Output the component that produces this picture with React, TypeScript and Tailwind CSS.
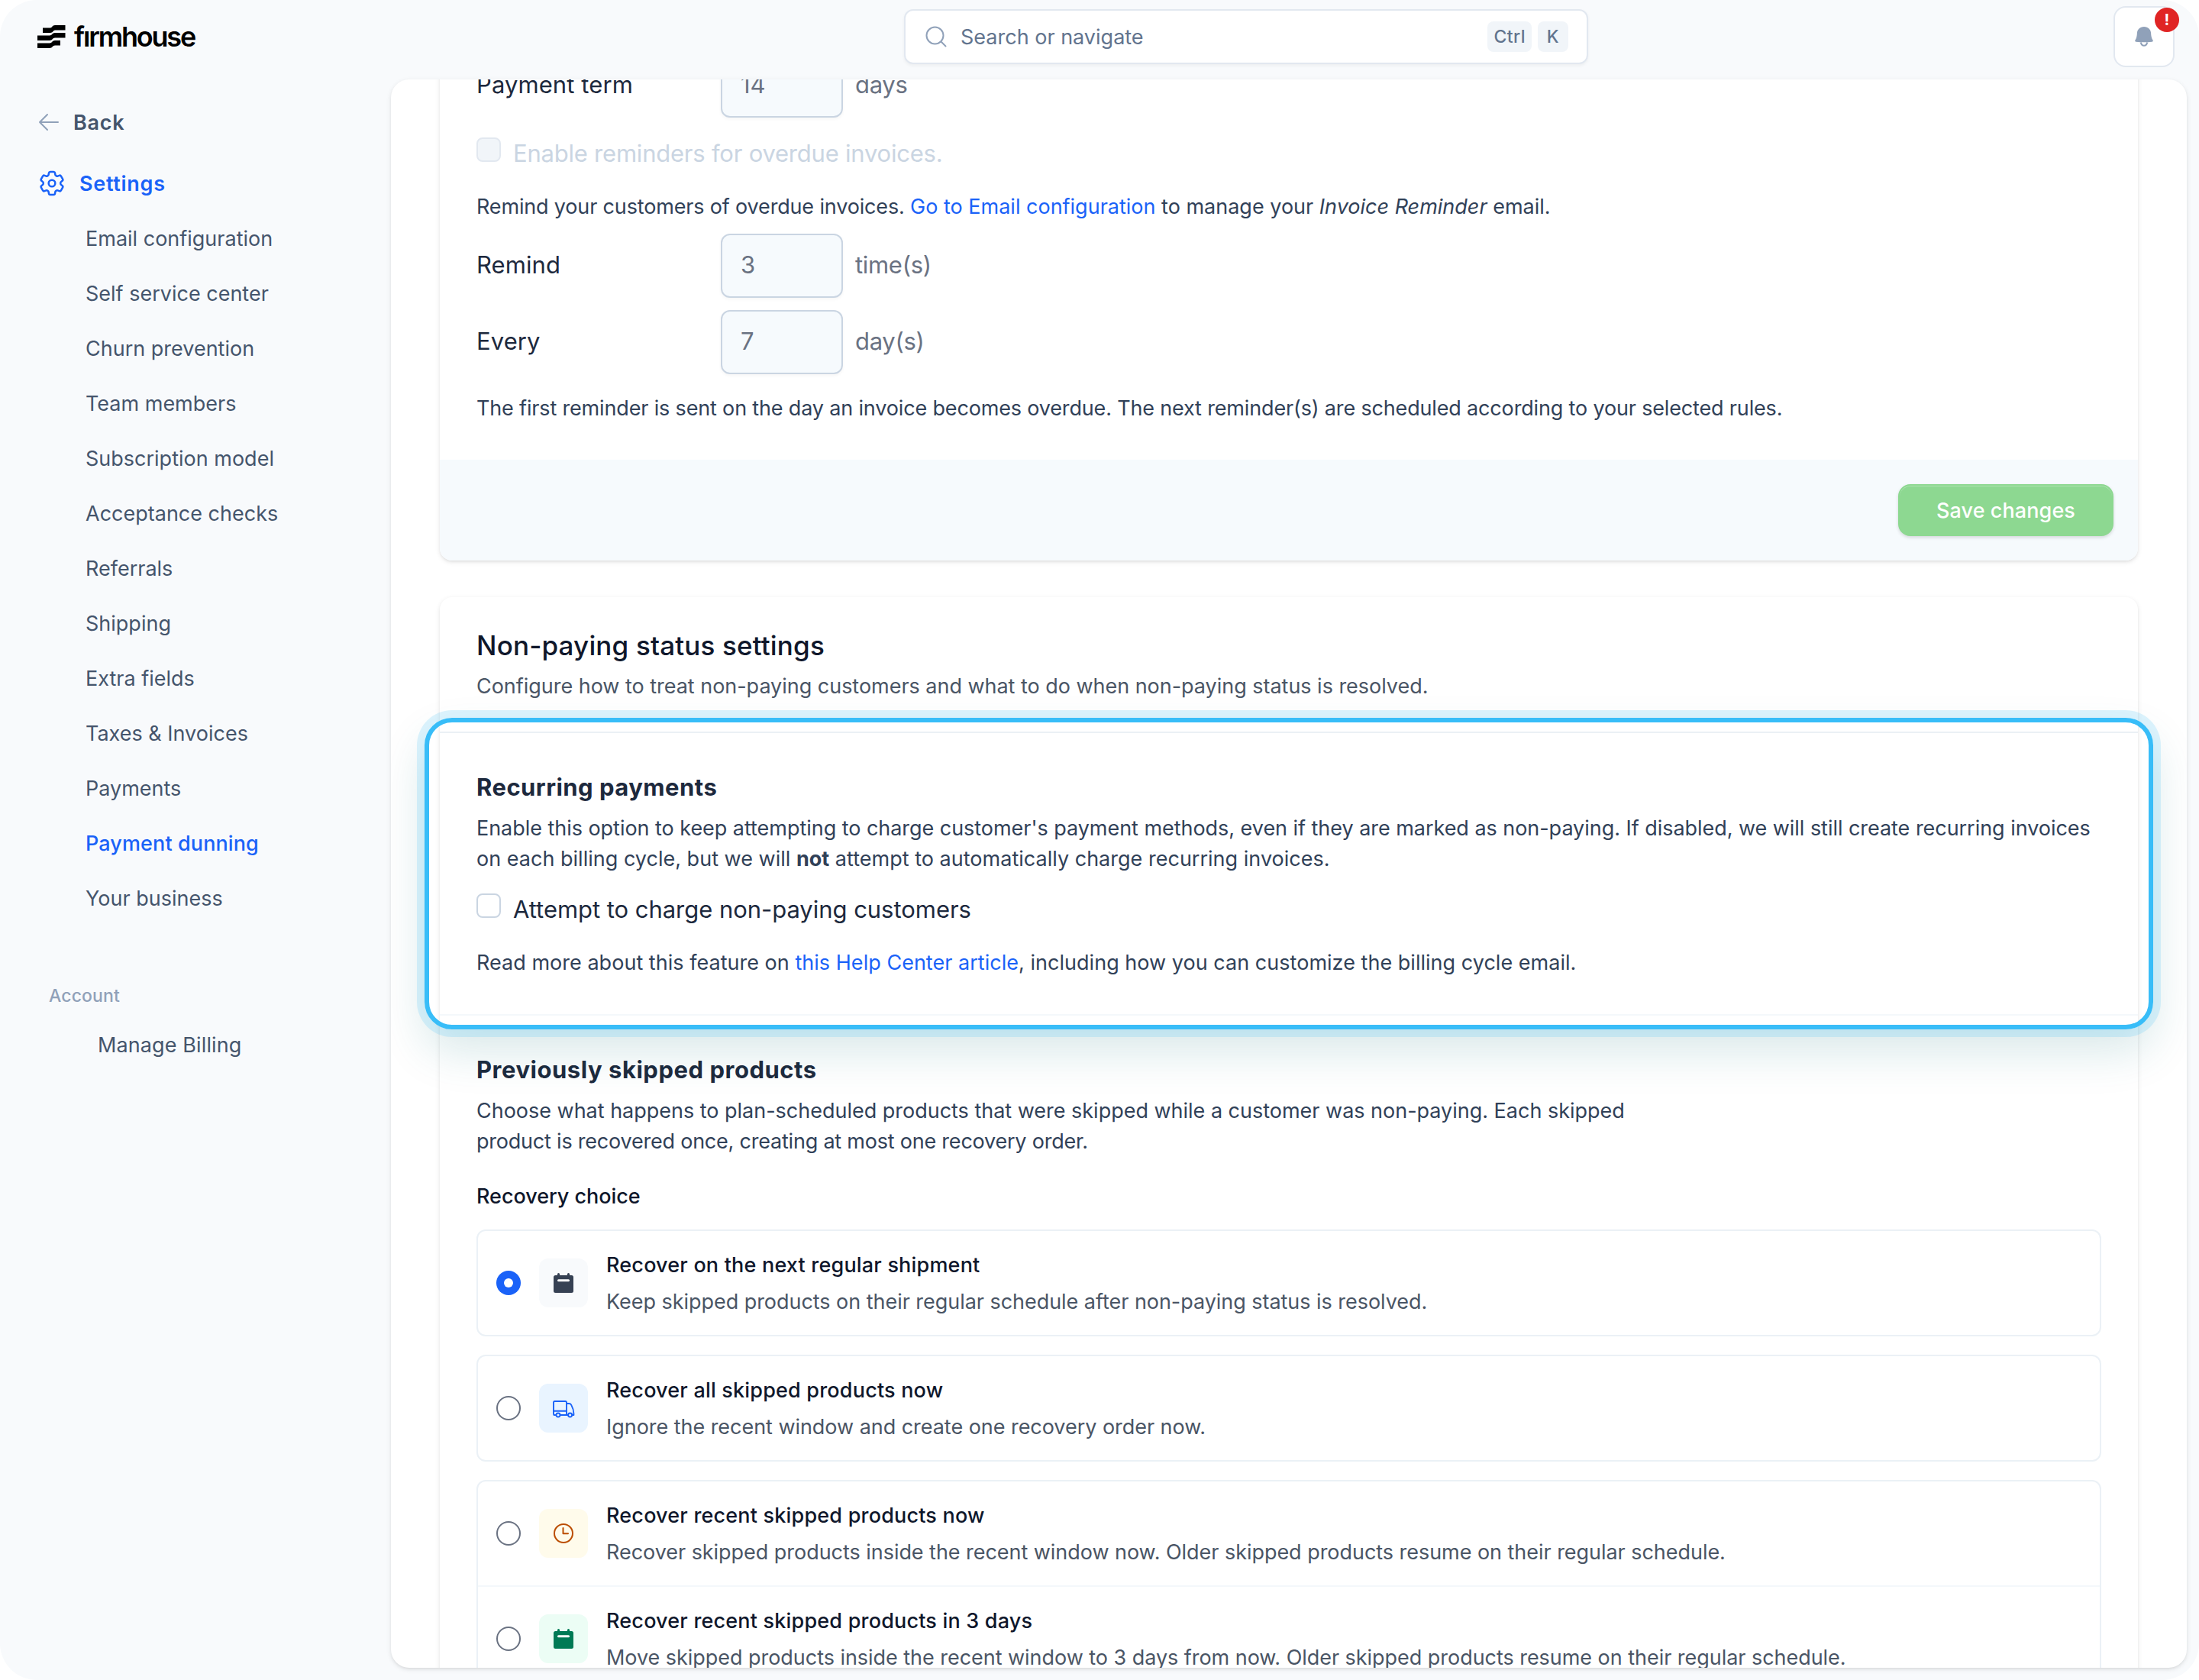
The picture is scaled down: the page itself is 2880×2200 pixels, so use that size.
import React from 'react';

type IconName = 'calendar' | 'truck' | 'clock';

interface RecoveryOption {
  title: string;
  description: string;
  icon: IconName;
  tile: string;
  checked?: boolean;
}

const NAV_ITEMS = [
  'Email configuration',
  'Self service center',
  'Churn prevention',
  'Team members',
  'Subscription model',
  'Acceptance checks',
  'Referrals',
  'Shipping',
  'Extra fields',
  'Taxes & Invoices',
  'Payments',
  'Payment dunning',
  'Your business',
];

const ACTIVE_ITEM = 'Payment dunning';

// Each group is drawn as one bordered box
const OPTION_GROUPS: RecoveryOption[][] = [
  [
    {
      title: 'Recover on the next regular shipment',
      description: 'Keep skipped products on their regular schedule after non-paying status is resolved.',
      icon: 'calendar',
      tile: 'bg-slate-50 text-gray-700',
      checked: true,
    },
  ],
  [
    {
      title: 'Recover all skipped products now',
      description: 'Ignore the recent window and create one recovery order now.',
      icon: 'truck',
      tile: 'bg-[#e9f4ff] text-[#1a62f8]',
    },
  ],
  [
    {
      title: 'Recover recent skipped products now',
      description:
        'Recover skipped products inside the recent window now. Older skipped products resume on their regular schedule.',
      icon: 'clock',
      tile: 'bg-amber-50 text-amber-700',
    },
    {
      title: 'Recover recent skipped products in 3 days',
      description:
        'Move skipped products inside the recent window to 3 days from now. Older skipped products resume on their regular schedule.',
      icon: 'calendar',
      tile: 'bg-emerald-50 text-emerald-700',
    },
  ],
];

const Logo = () => (
  <div className="flex items-center">
    <svg className="w-[37px] h-[30px]" viewBox="0 0 37 30" fill="black">
      <path d="M7 3.5H17C19 3.5 19.5 0 23 0H36.5V6.5H23C21 6.5 20 10 17 10H7Z" />
      <path d="M0 13.5H16C19 13.5 19.5 10 23 10H36.5V16.5H23C20 16.5 19.5 20 16 20H0Z" />
      <path d="M0 23.5H16C19 23.5 19.5 20 23 20H30V26.5H23C20 26.5 19.5 30 16 30H0Z" />
    </svg>
    <span className="ml-[11px] text-[36px] leading-[40px] font-semibold tracking-[-0.061em] text-black">fırmhouse</span>
  </div>
);

const GearIcon = () => (
  <svg className="w-10 h-10" viewBox="0 0 24 24" fill="none" stroke="currentColor" strokeWidth={1.5} strokeLinecap="round" strokeLinejoin="round">
    <path d="M9.594 3.94c.09-.542.56-.94 1.11-.94h2.593c.55 0 1.02.398 1.11.94l.213 1.281c.063.374.313.686.645.87.074.04.147.083.22.127.325.196.72.257 1.075.124l1.217-.456a1.125 1.125 0 0 1 1.37.49l1.296 2.247a1.125 1.125 0 0 1-.26 1.431l-1.003.827c-.293.241-.438.613-.43.992a7.723 7.723 0 0 1 0 .255c-.008.378.137.75.43.991l1.004.827c.424.35.534.955.26 1.43l-1.298 2.247a1.125 1.125 0 0 1-1.369.491l-1.217-.456c-.355-.133-.75-.072-1.076.124a6.47 6.47 0 0 1-.22.128c-.331.183-.581.495-.644.869l-.213 1.281c-.09.543-.56.94-1.11.94h-2.594c-.55 0-1.019-.398-1.11-.94l-.213-1.281c-.062-.374-.312-.686-.644-.87a6.52 6.52 0 0 1-.22-.127c-.325-.196-.72-.257-1.076-.124l-1.217.456a1.125 1.125 0 0 1-1.369-.49l-1.297-2.247a1.125 1.125 0 0 1 .26-1.431l1.004-.827c.292-.24.437-.613.43-.991a6.932 6.932 0 0 1 0-.255c.007-.38-.138-.751-.43-.992l-1.004-.827a1.125 1.125 0 0 1-.26-1.43l1.297-2.247a1.125 1.125 0 0 1 1.37-.491l1.216.456c.356.133.751.072 1.076-.124.072-.044.146-.086.22-.128.332-.183.582-.495.644-.869l.214-1.28Z" />
    <circle cx="12" cy="12" r="2.6" />
  </svg>
);

const OptionIcon: React.FC<{ name: IconName }> = ({ name }) => {
  if (name === 'calendar') {
    return (
      <svg className="w-8 h-8" viewBox="0 0 32 32" fill="none">
        <rect x="3" y="6" width="26" height="23" rx="2.5" fill="currentColor" />
        <path d="M9.5 4.5V8M22.5 4.5V8" stroke="currentColor" strokeWidth={3} strokeLinecap="round" />
        <path d="M9.5 12.8H22.5" stroke="white" strokeWidth={3} strokeLinecap="round" />
      </svg>
    );
  }
  if (name === 'truck') {
    return (
      <svg className="w-8 h-8" viewBox="0 0 32 32" fill="none" stroke="currentColor" strokeWidth={1.9} strokeLinecap="round" strokeLinejoin="round">
        <path d="M6 25H4.6Q3 25 3 23.4V8.6Q3 7 4.6 7H18.4Q20 7 20 8.6V25H11.8" />
        <path d="M3 19.7H20M20 10H23.2Q25.2 10 26.1 11.6Q29.4 17.5 29.4 23V25H27.8M20 25H21.6" />
        <circle cx="9" cy="25" r="2.5" />
        <circle cx="24.6" cy="25" r="2.5" />
      </svg>
    );
  }
  return (
    <svg className="w-8 h-8" viewBox="0 0 32 32" fill="none" stroke="currentColor" strokeWidth={2} strokeLinecap="round" strokeLinejoin="round">
      <circle cx="16" cy="16" r="12" />
      <path d="M15.5 9V16.3H22" />
    </svg>
  );
};

const Key: React.FC<{ children: string }> = ({ children }) => (
  <kbd className="h-10 px-2 min-w-10 flex items-center justify-center rounded-lg bg-slate-100 font-['Inter',sans-serif] text-[23px] font-medium tracking-[0.02em] text-slate-500">
    {children}
  </kbd>
);

const Header = () => (
  <header className="h-[104px] shrink-0 flex items-start">
    <div className="w-[1184px] shrink-0 pl-[49px] pt-[28px]">
      <Logo />
    </div>
    <div className="mt-3 w-[896px] h-[72px] flex items-center rounded-xl border-2 border-slate-200 bg-white pl-[26px] pr-6 shadow-[0_2px_4px_rgba(0,0,0,0.05)]">
      <svg className="w-[28px] h-[28px] text-slate-400" viewBox="0 0 28 28" fill="none" stroke="currentColor" strokeWidth={2} strokeLinecap="round">
        <circle cx="12.5" cy="12.5" r="11" />
        <path d="M20.5 20.5L26.5 26.5" />
      </svg>
      <span className="ml-[18px] flex-1 pt-0.5 text-[27px] text-slate-500">Search or navigate</span>
      <div className="flex gap-2">
        <Key>Ctrl</Key>
        <Key>K</Key>
      </div>
    </div>
    <div className="relative ml-auto mt-2 mr-8 w-20 h-20 flex items-center justify-center rounded-2xl border-2 border-slate-200 bg-white">
      <svg className="w-6 h-[26px] text-slate-400" viewBox="0 0 24 26" fill="none">
        <path d="M12 0C6.5 0 3.2 3.8 2.9 8.3C2.7 12.5 2.3 14.5.5 17.6C-.1 18.7.2 19.6 1.5 19.7C8.5 20.5 15.5 20.5 22.5 19.7C23.8 19.6 24.1 18.7 23.5 17.6C21.7 14.5 21.3 12.5 21.1 8.3C20.8 3.8 17.5 0 12 0Z" fill="currentColor" />
        <path d="M7.8 20.5C8.3 23.2 9.9 24.7 12 24.7C14.1 24.7 15.7 23.2 16.2 20.5" stroke="currentColor" strokeWidth={2} />
      </svg>
      <span className="absolute top-0 -right-2 w-8 h-8 rounded-full bg-[#e02424] flex items-center justify-center text-[20px] leading-none font-bold text-white">
        !
      </span>
    </div>
  </header>
);

const Sidebar = () => (
  <nav className="w-[512px] shrink-0 pt-5 text-[27px] leading-[40px] text-slate-600">
    <a className="h-[72px] flex items-center pl-[50px] font-semibold tracking-[0.026em]">
      <svg className="w-7 h-6 text-slate-400" viewBox="0 0 28 24" fill="none" stroke="currentColor" strokeWidth={2} strokeLinecap="round" strokeLinejoin="round">
        <path d="M26 12H2M12 2L2 12L12 22" />
      </svg>
      <span className="ml-[18px] pt-0.5">Back</span>
    </a>
    <a className="mt-2 h-[72px] flex items-center pl-12 font-semibold tracking-[0.026em] text-[#1a62f8]">
      <GearIcon />
      <span className="ml-4 pt-0.5">Settings</span>
    </a>
    {NAV_ITEMS.map((item) => (
      <a
        key={item}
        className={
          item === ACTIVE_ITEM
            ? 'h-[72px] flex items-center pl-28 pt-0.5 font-medium tracking-[0.004em] text-[#1a62f8]'
            : 'h-[72px] flex items-center pl-28 pt-0.5'
        }
      >
        {item}
      </a>
    ))}
    <p className="mt-[72px] pl-16 text-[23px] font-medium tracking-[0.006em] text-slate-400">Account</p>
    <a className="mt-[25px] block pl-32 tracking-[0.004em]">Manage Billing</a>
  </nav>
);

const NumberField: React.FC<{ label: string; value: string; unit: string }> = ({ label, value, unit }) => (
  <div className="h-[84px] flex items-center text-[31px] tracking-normal text-gray-500">
    <label className="w-80 pb-0.5 tracking-[0.003em] text-slate-800">{label}</label>
    <div className="w-40 h-[84px] flex items-center rounded-xl border-2 border-slate-300 bg-[#f6fafd] pl-6 pb-0.5 shadow-[0_2px_4px_rgba(0,0,0,0.04)]">
      {value}
    </div>
    <span className="ml-4 pb-0.5 tracking-[-0.01em]">{unit}</span>
  </div>
);

const PaymentTermCard = () => (
  <section className="rounded-2xl bg-white overflow-hidden shadow-[0_2px_6px_rgba(0,0,0,0.1),0_2px_4px_-2px_rgba(0,0,0,0.1)]">
    <div className="px-12 pt-12 pb-[47px] text-[27px] leading-[40px] text-slate-700">
      <NumberField label="Payment term" value="14" unit="days" />
      <div className="mt-[25px] flex items-start">
        <span className="mt-px w-8 h-8 rounded-lg border-2 border-slate-200 bg-slate-100" />
        <span className="ml-4 text-[31px] leading-[44px] tracking-[-0.007em] text-slate-300">
          Enable reminders for overdue invoices.
        </span>
      </div>
      <p className="mt-7 tracking-[-0.006em]">
        Remind your customers of overdue invoices.{' '}
        <span className="tracking-normal">
          <a className="text-[#1a62f8]">Go to Email configuration</a> to manage your <em>Invoice Reminder</em> email.
        </span>
      </p>
      <div className="mt-[15px] flex flex-col gap-4">
        <NumberField label="Remind" value="3" unit="time(s)" />
        <NumberField label="Every" value="7" unit="day(s)" />
      </div>
      <p className="mt-[25px] tracking-[-0.006em]">
        The first reminder is sent on the day an invoice becomes overdue. The next reminder(s) are scheduled according to
        your selected rules.
      </p>
    </div>
    <div className="h-[132px] flex items-center justify-end bg-[#f6fafd] px-8">
      <button className="w-[282px] h-[68px] rounded-2xl border-2 border-[#8dd891] bg-[#8dd891] pt-0.5 text-[27px] font-medium tracking-[0.003em] text-white shadow-[inset_0_1px_0_rgba(255,255,255,0.3),0_2px_4px_rgba(0,0,0,0.14)]">
        Save changes
      </button>
    </div>
  </section>
);

const RecurringPayments = () => (
  <div className="relative border-y-2 border-t-[#ebf0f5] border-b-[#f4f8fb] px-12 pt-[49px] pb-[47px]">
    <h3 className="text-[31px] leading-[44px] font-bold tracking-[0.015em] text-slate-800">Recurring payments</h3>
    <p className="mt-3">
      Enable this option to keep attempting to charge customer's payment methods, even if they are marked as non-paying.
      If disabled, we will still create recurring invoices
      <br />
      <span className="tracking-[0.0005em]">
        on each billing cycle, but we will <strong>not</strong> attempt to automatically charge recurring invoices.
      </span>
    </p>
    <div className="mt-6 flex items-start">
      <span className="mt-px w-8 h-8 rounded-lg border-2 border-slate-300 bg-white" />
      <span className="ml-4 text-[31px] leading-[44px] text-slate-800">Attempt to charge non-paying customers</span>
    </div>
    <p className="mt-7 tracking-[0.001em]">
      Read more about this feature on <a className="text-[#1a62f8]">this Help Center article</a>, including how you can
      customize the billing cycle email.
    </p>
    {/* Spotlight ring around this section */}
    <div className="pointer-events-none absolute -inset-x-5 -inset-y-5 z-10 rounded-[36px] border-[6px] border-[#38bdf8] shadow-[0_0_0_10px_rgba(56,189,248,0.17),0_28px_60px_rgba(13,112,118,0.16)]" />
  </div>
);

const OptionRow: React.FC<{ option: RecoveryOption }> = ({ option }) => (
  <label className="box-content h-[136px] flex items-center gap-6 px-6">
    {option.checked ? (
      <span className="w-8 h-8 rounded-full bg-[#1a62f8] flex items-center justify-center">
        <span className="w-3 h-3 rounded-full bg-white" />
      </span>
    ) : (
      <span className="w-8 h-8 rounded-full border-2 border-gray-500 bg-white" />
    )}
    <span className={`w-16 h-16 rounded-xl flex items-center justify-center ${option.tile}`}>
      <OptionIcon name={option.icon} />
    </span>
    <span className="flex flex-col gap-2 pt-0.5 whitespace-nowrap">
      <span className="font-medium tracking-[0.007em] text-slate-900">{option.title}</span>
      <span className="text-gray-600">{option.description}</span>
    </span>
  </label>
);

const NonPayingCard = () => (
  <section className="mt-12 rounded-2xl bg-white text-[27px] leading-[40px] tracking-[-0.0015em] text-slate-700 shadow-[0_2px_6px_rgba(0,0,0,0.1),0_2px_4px_-2px_rgba(0,0,0,0.1)]">
    <div className="px-12 py-[39px]">
      <h2 className="text-[35px] leading-[48px] font-medium tracking-[0.0045em] text-slate-900">
        Non-paying status settings
      </h2>
      <p className="mt-[10px] tracking-[-0.001em] text-gray-600">
        Configure how to treat non-paying customers and what to do when non-paying status is resolved.
      </p>
    </div>
    <RecurringPayments />
    <div className="px-12 pt-[49px] pb-12">
      <h3 className="text-[31px] leading-[44px] font-bold tracking-[0.017em] text-slate-800">
        Previously skipped products
      </h3>
      <p className="mt-3">
        <span className="tracking-[-0.0005em]">
          Choose what happens to plan-scheduled products that were skipped while a customer was non-paying. Each skipped
        </span>
        <br />
        <span className="tracking-[-0.008em]">product is recovered once, creating at most one recovery order.</span>
      </p>
      <p className="mt-8 font-medium text-slate-900">Recovery choice</p>
      <div className="mt-[23px] flex flex-col gap-6">
        {OPTION_GROUPS.map((group) => (
          <div key={group[0].title} className="rounded-xl border-2 border-[#ebf1f6] divide-y-2 divide-[#f4f8fb]">
            {group.map((option) => (
              <OptionRow key={option.title} option={option} />
            ))}
          </div>
        ))}
      </div>
    </div>
  </section>
);

export default function App() {
  return (
    <div className="w-[2880px] h-[2200px] bg-white font-['Inter',sans-serif]">
      <div className="h-full flex flex-col overflow-hidden rounded-[48px] bg-[#f8fafc]">
        <Header />
        <div className="flex h-[2080px]">
          <Sidebar />
          <main className="w-[2352px] overflow-hidden rounded-3xl bg-white px-16 shadow-[0_2px_6px_rgba(0,0,0,0.1),0_2px_4px_-2px_rgba(0,0,0,0.1)]">
            {/* Content is scrolled past the top of the first card */}
            <div className="-mt-[82px]">
              <PaymentTermCard />
              <NonPayingCard />
            </div>
          </main>
        </div>
      </div>
    </div>
  );
}
